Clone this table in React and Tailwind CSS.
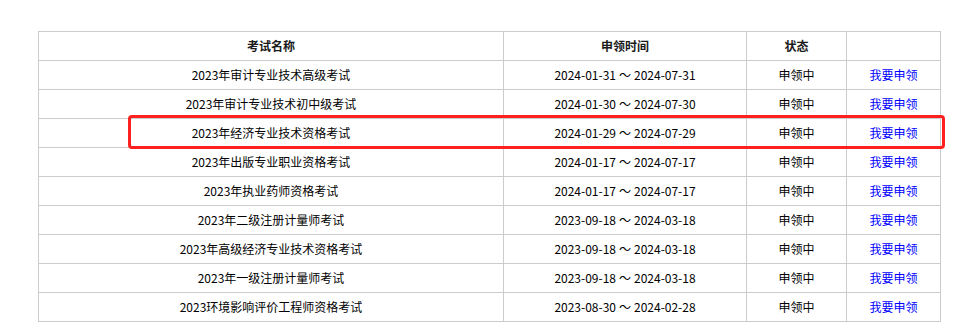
const rows = [
  { name: "2023年审计专业技术高级考试", start: "2024-01-31", end: "2024-07-31" },
  { name: "2023年审计专业技术初中级考试", start: "2024-01-30", end: "2024-07-30" },
  { name: "2023年经济专业技术资格考试", start: "2024-01-29", end: "2024-07-29" },
  { name: "2023年出版专业职业资格考试", start: "2024-01-17", end: "2024-07-17" },
  { name: "2023年执业药师资格考试", start: "2024-01-17", end: "2024-07-17" },
  { name: "2023年二级注册计量师考试", start: "2023-09-18", end: "2024-03-18" },
  { name: "2023年高级经济专业技术资格考试", start: "2023-09-18", end: "2024-03-18" },
  { name: "2023年一级注册计量师考试", start: "2023-09-18", end: "2024-03-18" },
  { name: "2023环境影响评价工程师资格考试", start: "2023-08-30", end: "2024-02-28" },
];

const cell = "border border-[#cccccc] text-center align-middle p-0";

const App = () => {
  return (
    <div
      className="min-h-[336px] bg-white pt-[31px] pl-[38px] text-[12px] text-black"
      style={{ fontFamily: '"Noto Sans CJK SC", "Liberation Sans", sans-serif' }}
    >
      <div className="relative w-[902px]">
        <table className="w-[902px] table-fixed border-collapse">
          <colgroup>
            <col className="w-[465px]" />
            <col className="w-[243px]" />
            <col className="w-[100px]" />
            <col className="w-[94px]" />
          </colgroup>
          <thead>
            <tr className="h-[29px]">
              <th className={`${cell} font-bold text-[#1a1a1a]`}>考试名称</th>
              <th className={`${cell} font-bold text-[#1a1a1a]`}>申领时间</th>
              <th className={`${cell} font-bold text-[#1a1a1a]`}>状态</th>
              <th className={cell}></th>
            </tr>
          </thead>
          <tbody>
            {rows.map((r) => (
              <tr key={r.name} className="h-[29px]">
                <td className={cell}>{r.name}</td>
                <td className={cell}>
                  {r.start}
                  <span className="px-[3px]">～</span>
                  {r.end}
                </td>
                <td className={cell}>申领中</td>
                <td className={cell}>
                  <a href="#" className="text-[#0000ff]">我要申领</a>
                </td>
              </tr>
            ))}
          </tbody>
        </table>

        {/* highlight box over the 经济 row */}
        <div className="pointer-events-none absolute left-[90px] top-[84px] h-[34px] w-[817px] rounded-[4px] border-[3px] border-[#ff2020]" />
      </div>
    </div>
  );
};

export default App;
